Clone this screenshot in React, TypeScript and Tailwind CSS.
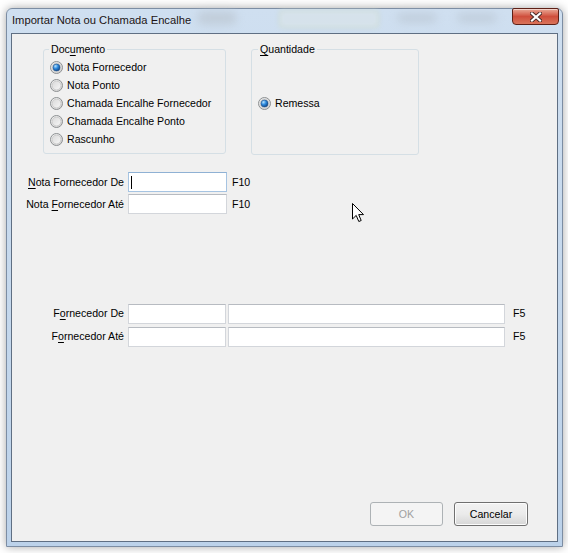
import React, { useId } from 'react';

const font = "font-['Liberation_Sans',Arial,sans-serif]";

const Radio: React.FC<{ checked?: boolean }> = ({ checked }) => {
  const id = useId().replace(/[^a-zA-Z0-9]/g, '');
  return (
    <svg width="13" height="13" viewBox="0 0 13 13" className="shrink-0">
      <defs>
        <linearGradient id={`${id}o`} x1="0" y1="0" x2="1" y2="1">
          <stop offset="0" stopColor="#f6f6f6" />
          <stop offset="1" stopColor="#cfcfcf" />
        </linearGradient>
        <linearGradient id={`${id}i`} x1="0" y1="0" x2="1" y2="1">
          <stop offset="0" stopColor="#d9d9d9" />
          <stop offset="1" stopColor="#f7f7f7" />
        </linearGradient>
        <radialGradient id={`${id}d`} cx="0.35" cy="0.3" r="0.8">
          <stop offset="0" stopColor="#b6e3ff" />
          <stop offset="0.45" stopColor="#2d8ade" />
          <stop offset="1" stopColor="#0d3b78" />
        </radialGradient>
      </defs>
      <circle cx="6.5" cy="6.5" r="6" fill={`url(#${id}o)`} stroke="#8d9092" />
      <circle cx="6.5" cy="6.5" r="4.4" fill={`url(#${id}i)`} stroke="#c3c3c3" strokeWidth="0.7" />
      {checked && <circle cx="6.5" cy="6.5" r="3.5" fill={`url(#${id}d)`} stroke="#1a4c88" strokeWidth="0.6" />}
    </svg>
  );
};

const RadioRow: React.FC<{ label: string; checked?: boolean }> = ({ label, checked }) => (
  <div className="flex items-center h-[18px] gap-[4px]">
    <Radio checked={checked} />
    <span>{label}</span>
  </div>
);

const TextBox: React.FC<{ className: string; focused?: boolean }> = ({ className, focused }) => (
  <div
    className={`${className} h-[20px] bg-white border flex items-center ${
      focused ? 'border-[#a6c4e2] border-t-[#8fb1d4]' : 'border-[#d3d6db] border-t-[#b7bbc1]'
    }`}
  >
    {focused && <span className="ml-[2px] w-px h-[13px] bg-black" />}
  </div>
);

const FieldLabel: React.FC<{ before: string; key1: string; after: string }> = ({ before, key1, after }) => (
  <span className="w-[112px] text-right whitespace-nowrap">
    {before}
    <span className="underline underline-offset-[2px]">{key1}</span>
    {after}
  </span>
);

const App: React.FC = () => {
  return (
    <div className={`relative w-[568px] h-[553px] bg-white pt-[8px] pl-[6px] overflow-hidden ${font} text-[10.6px] leading-[13px] text-black`}>
      {/* Window */}
      <div className="w-[557px] h-[539px] flex flex-col rounded-t-[6px] border border-[#7c8da3] bg-gradient-to-b from-[#cfdff0] to-[#bcd2ea] shadow-[0_0_10px_rgba(0,0,0,0.35)]">
        {/* Title bar */}
        <div className="relative h-[24px] flex items-start justify-between">
          <div className="absolute left-[190px] top-[2px] w-[40px] h-[14px] rounded-full bg-[#b9c3cd] blur-[4px] opacity-60" />
          <div className="absolute left-[272px] top-[1px] w-[100px] h-[18px] rounded-[3px] border border-[#c9d6b0] bg-[#d9e4ea] blur-[2px] opacity-70" />
          <div className="absolute left-[390px] top-[4px] w-[40px] h-[10px] rounded-full bg-[#b5c0cb] blur-[4px] opacity-50" />
          <div className="absolute left-[450px] top-[4px] w-[40px] h-[10px] rounded-full bg-[#b5c0cb] blur-[4px] opacity-50" />
          <span className="relative pl-[5px] pt-[3px] text-[11.2px] leading-[16px] text-[#1c1414]">
            Importar Nota ou Chamada Encalhe
          </span>
          <div className="relative mr-[3px] -mt-px w-[47px] h-[17px] rounded-b-[4px] rounded-t-[2px] border border-[#5e2016] bg-gradient-to-b from-[#e8a897] via-[#cf4e3c] to-[#d9735a] flex items-center justify-center shadow-[inset_0_1px_0_rgba(255,255,255,0.5)]">
            <svg width="12" height="10" viewBox="0 0 12 10">
              <path d="M2 1.5 L10 8.5 M10 1.5 L2 8.5" stroke="#4a2a26" strokeWidth="4" strokeLinecap="square" />
              <path d="M2 1.5 L10 8.5 M10 1.5 L2 8.5" stroke="#ffffff" strokeWidth="2.2" strokeLinecap="square" />
            </svg>
          </div>
        </div>

        {/* Client area */}
        <div className="flex-1 ml-[4px] mr-[4px] mb-[4px] border border-[#5f6f83] bg-[#f0f0f0] flex flex-col">
          {/* Group boxes */}
          <div className="flex mt-[9px] ml-[31px] gap-[25px]">
            <fieldset className="w-[183px] h-[111px] border border-[#d5dfe5] rounded-[3px] pl-[5px]">
              <legend className="px-[2px] leading-[13px]">
                Doc<span className="underline underline-offset-[2px]">u</span>mento
              </legend>
              <div className="pt-[2px] pl-[1px]">
                <RadioRow label="Nota Fornecedor" checked />
                <RadioRow label="Nota Ponto" />
                <RadioRow label="Chamada Encalhe Fornecedor" />
                <RadioRow label="Chamada Encalhe Ponto" />
                <RadioRow label="Rascunho" />
              </div>
            </fieldset>
            <fieldset className="w-[168px] h-[112px] border border-[#d5dfe5] rounded-[3px] pl-[6px]">
              <legend className="px-[2px] leading-[13px]">
                <span className="underline underline-offset-[2px]">Q</span>uantidade
              </legend>
              <div className="pt-[38px]">
                <RadioRow label="Remessa" checked />
              </div>
            </fieldset>
          </div>

          {/* Nota fields */}
          <div className="mt-[17px] flex flex-col gap-[2px]">
            <div className="flex items-center h-[20px]">
              <FieldLabel before="" key1="N" after="ota Fornecedor De" />
              <TextBox className="ml-[4px] w-[99px]" focused />
              <span className="ml-[5px]">F10</span>
            </div>
            <div className="flex items-center h-[20px]">
              <FieldLabel before="Nota " key1="F" after="ornecedor Até" />
              <TextBox className="ml-[4px] w-[99px]" />
              <span className="ml-[5px]">F10</span>
            </div>
          </div>

          {/* Fornecedor fields */}
          <div className="mt-[89px] flex flex-col gap-[2px]">
            <div className="flex items-center h-[21px]">
              <FieldLabel before="F" key1="o" after="rnecedor De" />
              <TextBox className="ml-[4px] w-[98px]" />
              <TextBox className="ml-[2px] w-[277px]" />
              <span className="ml-[8px]">F5</span>
            </div>
            <div className="flex items-center h-[21px]">
              <FieldLabel before="F" key1="o" after="rnecedor Até" />
              <TextBox className="ml-[4px] w-[98px]" />
              <TextBox className="ml-[2px] w-[277px]" />
              <span className="ml-[8px]">F5</span>
            </div>
          </div>

          {/* Buttons */}
          <div className="mt-auto pb-[15px] pr-[29px] flex justify-end gap-[11px]">
            <button className="w-[73px] h-[24px] rounded-[3px] border border-[#adb2b5] bg-[#f4f4f4] text-[#a0a0a0]">
              OK
            </button>
            <button className="w-[74px] h-[24px] rounded-[3px] border border-[#707070] bg-gradient-to-b from-[#f2f2f2] via-[#ebebeb] to-[#d6d6d6] shadow-[inset_0_0_0_1px_#fcfcfc]">
              Cancelar
            </button>
          </div>
        </div>
      </div>

      {/* Mouse pointer */}
      <svg className="absolute left-[352px] top-[203px]" width="13" height="20" viewBox="0 0 13 20">
        <path d="M0.5 0.5 L0.5 16 L4.2 12.4 L6.8 18.5 L9.2 17.5 L6.7 11.6 L11.5 11.6 Z" fill="#ffffff" stroke="#000000" strokeWidth="1" strokeLinejoin="miter" />
      </svg>
    </div>
  );
};

export default App;
